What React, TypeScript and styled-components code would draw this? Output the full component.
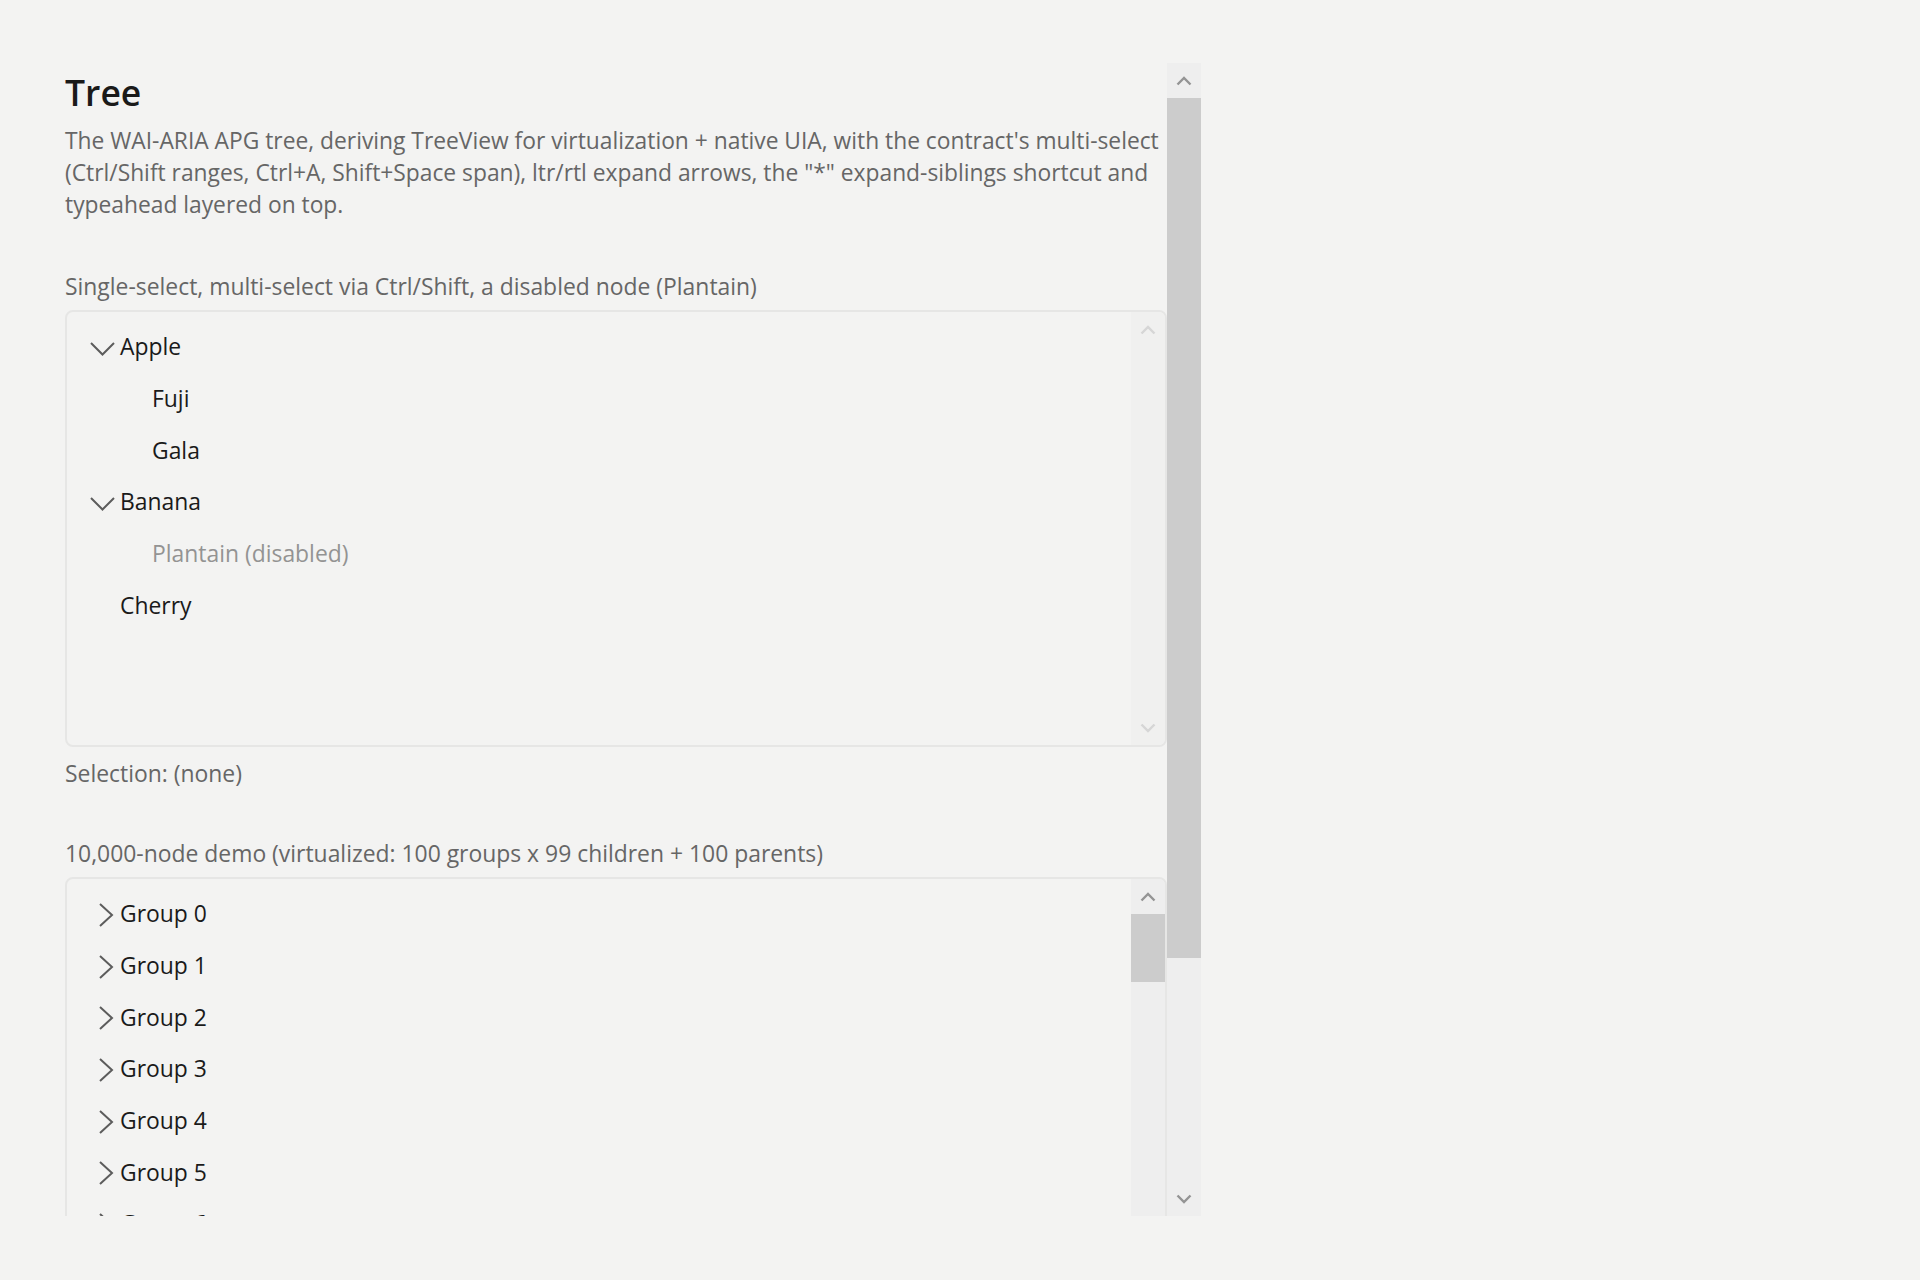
import styled, { createGlobalStyle } from 'styled-components';

const GlobalStyle = createGlobalStyle`
  body {
    margin: 0;
    background-color: #f3f3f2;
    font-family: 'Open Sans', 'Noto Sans', sans-serif;
    color: #1a1a1a;
  }
`;

const Page = styled.div`
  padding-top: 63px;
`;

const Viewer = styled.div`
  display: flex;
  width: 1201px;
  height: 1153px;
  overflow: hidden;
`;

const Content = styled.div`
  flex: 1;
  min-width: 0;
  padding: 4px 0 0 65px;
`;

const Title = styled.h1`
  margin: 0;
  font-size: 35.5px;
  font-weight: 600;
  line-height: 50px;
  color: #1a1a1a;
`;

const Intro = styled.p`
  margin: 8px 0 0;
  font-size: 22.8px;
  line-height: 32px;
  color: #666666;
`;

const Section = styled.section<{ $gap: number }>`
  margin-top: ${(props) => props.$gap}px;
`;

const Caption = styled.div`
  font-size: 22.9px;
  line-height: 32px;
  color: #666666;
`;

const Note = styled(Caption)`
  margin-top: 11px;
`;

const TreeBox = styled.div<{ $height: number }>`
  box-sizing: border-box;
  display: flex;
  height: ${(props) => props.$height}px;
  margin-top: 7px;
  border: 2px solid #e6e6e5;
  border-radius: 8px;
  overflow: hidden;
`;

const RowList = styled.ul`
  flex: 1;
  margin: 0;
  padding: 9px 0 0;
  list-style: none;
`;

const Row = styled.li<{ $depth: number; $disabled?: boolean }>`
  display: flex;
  align-items: center;
  height: 51.7px;
  padding-left: ${(props) => 22 + props.$depth * 32}px;
  font-size: 22.9px;
  color: ${(props) => (props.$disabled ? '#939393' : '#1a1a1a')};
`;

const Glyph = styled.span`
  display: flex;
  width: 31px;
  height: 28px;
  flex-shrink: 0;
`;

const ScrollBar = styled.div<{ $muted?: boolean }>`
  display: flex;
  flex-direction: column;
  width: 34px;
  flex-shrink: 0;
  background-color: ${(props) => (props.$muted ? '#f0f0ef' : '#eeeeee')};
`;

const ArrowButton = styled.div`
  display: flex;
  align-items: center;
  justify-content: center;
  height: 35px;
  flex-shrink: 0;
`;

const Thumb = styled.div<{ $size: number }>`
  height: ${(props) => props.$size}px;
  flex-shrink: 0;
  background-color: #cccccc;
`;

const Rest = styled.div`
  flex: 1;
`;

type Node = { label: string; depth: number; expanded?: boolean; disabled?: boolean };

const fruit: Node[] = [
  { label: 'Apple', depth: 0, expanded: true },
  { label: 'Fuji', depth: 1 },
  { label: 'Gala', depth: 1 },
  { label: 'Banana', depth: 0, expanded: true },
  { label: 'Plantain (disabled)', depth: 1, disabled: true },
  { label: 'Cherry', depth: 0 },
];

const groups: Node[] = Array.from({ length: 9 }, (_, i) => ({
  label: `Group ${i}`,
  depth: 0,
  expanded: false,
}));

const Chevron = ({ open }: { open: boolean }) => (
  <svg width="28" height="28" viewBox="0 0 28 28" fill="none">
    <polyline
      points={open ? '2,10 13.5,21.5 25,10' : '11,4 23,15 11,26'}
      stroke="#5c5c5c"
      strokeWidth="2"
      strokeLinejoin="miter"
    />
  </svg>
);

const Arrow = ({ up, color }: { up: boolean; color: string }) => (
  <svg width="16" height="10" viewBox="0 0 16 10" fill="none">
    <polyline
      points={up ? '1.5,8.5 8,2 14.5,8.5' : '1.5,1.5 8,8 14.5,1.5'}
      stroke={color}
      strokeWidth="2.4"
    />
  </svg>
);

const Scroller = ({ thumb, muted }: { thumb?: number; muted?: boolean }) => {
  const color = muted ? '#d6d6d6' : '#949494';
  return (
    <ScrollBar $muted={muted}>
      <ArrowButton>
        <Arrow up color={color} />
      </ArrowButton>
      {thumb ? <Thumb $size={thumb} /> : null}
      <Rest />
      <ArrowButton>
        <Arrow up={false} color={color} />
      </ArrowButton>
    </ScrollBar>
  );
};

const Tree = ({ nodes, height, thumb, muted }: { nodes: Node[]; height: number; thumb?: number; muted?: boolean }) => (
  <TreeBox $height={height} role="tree">
    <RowList>
      {nodes.map((n) => (
        <Row key={n.label} $depth={n.depth} $disabled={n.disabled} role="treeitem">
          <Glyph>{n.expanded !== undefined && <Chevron open={n.expanded} />}</Glyph>
          {n.label}
        </Row>
      ))}
    </RowList>
    <Scroller thumb={thumb} muted={muted} />
  </TreeBox>
);

export default function App() {
  return (
    <Page>
      <GlobalStyle />
      <Viewer>
        <Content>
          <Title>Tree</Title>
          <Intro>
            The WAI-ARIA APG tree, deriving TreeView for virtualization + native UIA, with the contract's multi-select
            (Ctrl/Shift ranges, Ctrl+A, Shift+Space span), ltr/rtl expand arrows, the "*" expand-siblings shortcut and
            typeahead layered on top.
          </Intro>

          <Section $gap={50}>
            <Caption>Single-select, multi-select via Ctrl/Shift, a disabled node (Plantain)</Caption>
            <Tree nodes={fruit} height={437} muted />
            <Note>Selection: (none)</Note>
          </Section>

          <Section $gap={48}>
            <Caption>10,000-node demo (virtualized: 100 groups x 99 children + 100 parents)</Caption>
            <Tree nodes={groups} height={437} thumb={68} />
          </Section>
        </Content>
        <Scroller thumb={860} />
      </Viewer>
    </Page>
  );
}
